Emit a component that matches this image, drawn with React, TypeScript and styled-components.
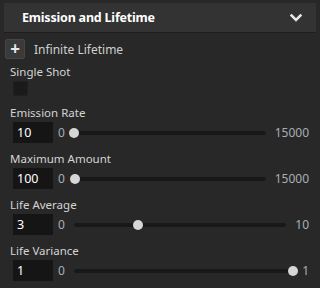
import styled, { createGlobalStyle } from 'styled-components';

const GlobalStyle = createGlobalStyle`
    html, body {
        margin: 0;
        padding: 0;
        background: #282828;
    }
    body {
        font-family: 'Noto Sans', 'Open Sans', sans-serif;
        font-size: 11.5px;
        color: #cfcfcf;
    }
`;

interface SliderField {
    label: string;
    value: number;
    min: number;
    max: number;
}

const fields: SliderField[] = [
    { label: 'Emission Rate', value: 10, min: 0, max: 15000 },
    { label: 'Maximum Amount', value: 100, min: 0, max: 15000 },
    { label: 'Life Average', value: 3, min: 0, max: 10 },
    { label: 'Life Variance', value: 1, min: 0, max: 1 },
];

const Chevron = () => (
    <svg width="12" height="8" viewBox="0 0 12 8">
        <path
            d="M1.5 1.5 L6 6 L10.5 1.5"
            fill="none"
            stroke="#e6e6e6"
            strokeWidth="2.6"
            strokeLinecap="square"
        />
    </svg>
);

const App = () => {
    return (
        <>
            <GlobalStyle />
            <Panel>
                <Header>
                    <Title>Emission and Lifetime</Title>
                    <Chevron />
                </Header>
                <Body>
                    <ToggleRow>
                        <PlusButton>+</PlusButton>
                        <ToggleLabel>Infinite Lifetime</ToggleLabel>
                    </ToggleRow>
                    <Field>
                        <Label>Single Shot</Label>
                        <Checkbox />
                    </Field>
                    {fields.map((f) => {
                        const pct = ((f.value - f.min) / (f.max - f.min)) * 100;
                        return (
                            <Field key={f.label}>
                                <Label>{f.label}</Label>
                                <SliderRow>
                                    <NumberBox>{f.value}</NumberBox>
                                    <Bound>{f.min}</Bound>
                                    <Track>
                                        <Thumb style={{ left: `${pct}%` }} />
                                    </Track>
                                    <Bound>{f.max}</Bound>
                                </SliderRow>
                            </Field>
                        );
                    })}
                </Body>
            </Panel>
        </>
    );
};

const Panel = styled.div`
    width: 320px;
    height: 288px;
    padding: 3px 4px 0 4px;
    box-sizing: border-box;
    overflow: hidden;
`;

const Header = styled.div`
    height: 30px;
    background: #333333;
    border-bottom: 1px solid #1e1e1e;
    display: flex;
    align-items: center;
    justify-content: space-between;
    padding: 0 14px 0 18px;
    box-sizing: border-box;
`;

const Title = styled.div`
    font-weight: bold;
    font-size: 12.5px;
    color: #ffffff;
    letter-spacing: -0.2px;
`;

const Body = styled.div`
    display: flex;
    flex-direction: column;
    padding-top: 6px;
`;

const ToggleRow = styled.div`
    display: flex;
    align-items: center;
    gap: 9px;
    height: 20px;
    margin-left: 1px;
`;

const PlusButton = styled.div`
    width: 20px;
    height: 20px;
    background: #3a3a3a;
    border: 1px solid #454545;
    border-radius: 2px;
    box-sizing: border-box;
    display: flex;
    align-items: center;
    justify-content: center;
    color: #e8e8e8;
    font-size: 17px;
    font-weight: bold;
    line-height: 1;
    padding-bottom: 2px;
`;

const ToggleLabel = styled.span`
    color: #cfcfcf;
    font-size: 12px;
`;

const Field = styled.div`
    display: flex;
    flex-direction: column;
    padding-left: 6px;
    margin-top: 4px;
    margin-bottom: 3px;
`;

const Label = styled.div`
    height: 18px;
    line-height: 18px;
    color: #d4d4d4;
`;

const Checkbox = styled.div`
    width: 15px;
    height: 15px;
    margin: 0 0 1px 3px;
    background: #1a1a1a;
    border: 1px solid #202020;
    box-sizing: border-box;
`;

const SliderRow = styled.div`
    display: flex;
    align-items: center;
    height: 21px;
    padding-left: 3px;
    padding-right: 7px;
    gap: 5px;
`;

const NumberBox = styled.div`
    width: 40px;
    height: 21px;
    background: #151515;
    color: #ffffff;
    box-sizing: border-box;
    padding-left: 4px;
    line-height: 21px;
    font-size: 12.5px;
`;

const Bound = styled.span`
    color: #a8aeb4;
    font-size: 12px;
`;

const Track = styled.div`
    flex: 1;
    height: 4px;
    background: #181818;
    border-radius: 2px;
    position: relative;
    margin: 0 4px;
`;

const Thumb = styled.div`
    position: absolute;
    top: 50%;
    width: 10px;
    height: 10px;
    border-radius: 50%;
    background: #d6d6d6;
    transform: translate(-50%, -50%);
`;

export default App;
